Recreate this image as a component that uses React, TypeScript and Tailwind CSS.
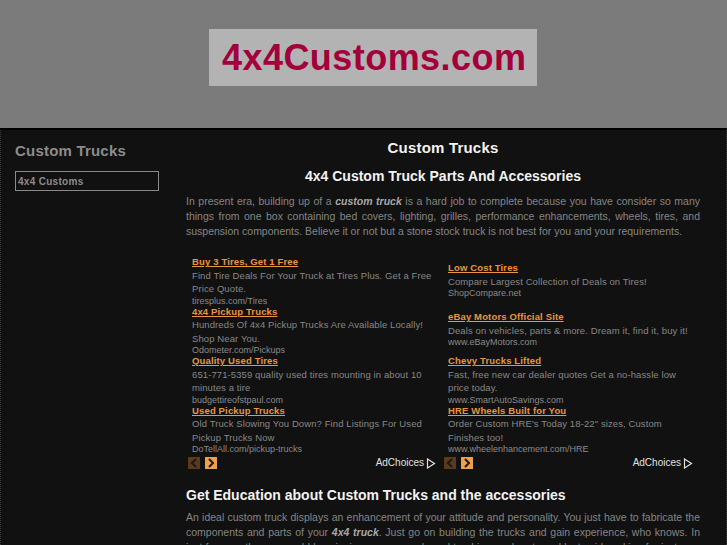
import React from "react";

type AdT = { title: string; desc: string; url: string; mt?: string };

function Ad({ title, desc, url, mt }: AdT) {
  return (
    <div className={mt ?? ""}>
      <div className="text-[9.5px] leading-[12.5px] font-bold text-[#e8953e] underline tracking-[0.15px]">{title}</div>
      <div className="text-[9.5px] leading-[13.5px] text-[#878787] tracking-[0.1px]">{desc}</div>
      <div className="text-[9px] leading-[10px] text-[#8a8a8a]">{url}</div>
    </div>
  );
}

function AdFooter() {
  return (
    <div className="flex items-center justify-between mt-auto pt-[2px]">
      <div className="flex gap-[5px] -ml-[4px]">
        <div className="w-[12px] h-[12px] bg-[#5a3a1c] flex items-center justify-center">
          <svg width="8" height="10" viewBox="0 0 8 10"><path d="M6 1 L2 5 L6 9" stroke="#1a1a1a" strokeWidth="2" fill="none" /></svg>
        </div>
        <div className="w-[12px] h-[12px] bg-[#f0a04a] flex items-center justify-center">
          <svg width="8" height="10" viewBox="0 0 8 10"><path d="M2 1 L6 5 L2 9" stroke="#1a1a1a" strokeWidth="2" fill="none" /></svg>
        </div>
      </div>
      <div className="flex items-center gap-[2px] text-[10px] leading-[12px] text-[#e0e0e0] mr-[1px] mt-[1px]">
        <span>AdChoices</span>
        <svg width="10" height="11" viewBox="0 0 10 11"><path d="M1.5 1 L8.5 5.5 L1.5 10 Z" stroke="#e0e0e0" strokeWidth="1.2" fill="none" /></svg>
      </div>
    </div>
  );
}

export default function App() {
  const left: AdT[] = [
    { title: "Buy 3 Tires, Get 1 Free", desc: "Find Tire Deals For Your Truck at Tires Plus. Get a Free Price Quote.", url: "tiresplus.com/Tires" },
    { title: "4x4 Pickup Trucks", desc: "Hundreds Of 4x4 Pickup Trucks Are Available Locally! Shop Near You.", url: "Odometer.com/Pickups" },
    { title: "Quality Used Tires", desc: "651-771-5359 quality used tires mounting in about 10 minutes a tire", url: "budgettireofstpaul.com" },
    { title: "Used Pickup Trucks", desc: "Old Truck Slowing You Down? Find Listings For Used Pickup Trucks Now", url: "DoTellAll.com/pickup-trucks" },
  ];
  const right: AdT[] = [
    { title: "Low Cost Tires", desc: "Compare Largest Collection of Deals on Tires!", url: "ShopCompare.net", mt: "mt-[6px]" },
    { title: "eBay Motors Official Site", desc: "Deals on vehicles, parts & more. Dream it, find it, buy it!", url: "www.eBayMotors.com", mt: "mt-[13px]" },
    { title: "Chevy Trucks Lifted", desc: "Fast, free new car dealer quotes Get a no-hassle low price today.", url: "www.SmartAutoSavings.com", mt: "mt-[8px]" },
    { title: "HRE Wheels Built for You", desc: "Order Custom HRE's Today 18-22\" sizes, Custom Finishes too!", url: "www.wheelenhancement.com/HRE" },
  ];
  return (
    <div className="w-[727px] h-[545px] overflow-hidden bg-[#111111] font-['Liberation_Sans',Arial,sans-serif]">
      <div className="h-[128px] bg-[#7b7b7b] pl-[209px] pt-[29px]">
        <div className="w-[328px] h-[57px] bg-[#b3b3b3] flex items-center pl-[13px]">
          <span className="text-[36px] font-bold text-[#a3003b] leading-none tracking-[0.45px]">4x4Customs.com</span>
        </div>
      </div>
      <div className="h-[2px] bg-[#000]" />
      <div className="flex border-l border-r border-dotted border-[#3a3a3a] h-[415px]">
        <div className="w-[171px] shrink-0 pl-[14px] pt-[12px]">
          <div className="text-[15px] font-bold text-[#8c8c8c] leading-[18px] tracking-[0.2px]">Custom Trucks</div>
          <div className="mt-[11px] w-[144px] h-[20px] border border-[#8a8a8a] flex items-center pl-[2px] text-[10px] font-bold text-[#8c8c8c] tracking-[0.3px]">4x4 Customs</div>
        </div>
        <div className="w-[514px] ml-[14px] pt-[9px]">
          <div className="text-center text-[15px] font-bold text-[#f2f2f2] leading-[18px] tracking-[0.2px]">Custom Trucks</div>
          <div className="text-center text-[14px] font-bold text-[#f2f2f2] leading-[17px] mt-[11px]">4x4 Custom Truck Parts And Accessories</div>
          <p className="mt-[9px] text-[10.5px] leading-[15px] text-[#858585] text-justify">
            In present era, building up of a <b className="italic text-[#a8a8a8]">custom truck</b> is a hard job to complete because you have consider so many things from one box containing bed covers, lighting, grilles, performance enhancements, wheels, tires, and suspension components. Believe it or not but a stone stock truck is not best for you and your requirements.
          </p>
          <div className="mt-[17px] grid grid-cols-2">
            <div className="pl-[6px] pr-[6px] flex flex-col">
              {left.map((a) => <Ad key={a.title} {...a} />)}
              <AdFooter />
            </div>
            <div className="pl-[5px] pr-[6px] flex flex-col">
              {right.map((a) => <Ad key={a.title} {...a} />)}
              <AdFooter />
            </div>
          </div>
          <div className="mt-[18px] text-[14px] font-bold text-[#f2f2f2] leading-[17px]">Get Education about Custom Trucks and the accessories</div>
          <p className="mt-[6px] text-[10.5px] leading-[15px] text-[#858585] text-justify">
            An ideal custom truck displays an enhancement of your attitude and personality. You just have to fabricate the components and parts of your <b className="italic text-[#a8a8a8]">4x4 truck</b>. Just go on building the trucks and gain experience, who knows. In just few months you would be winning many awards and trophies, and parts and last aside asking for instance guide to build.
          </p>
        </div>
      </div>
    </div>
  );
}
